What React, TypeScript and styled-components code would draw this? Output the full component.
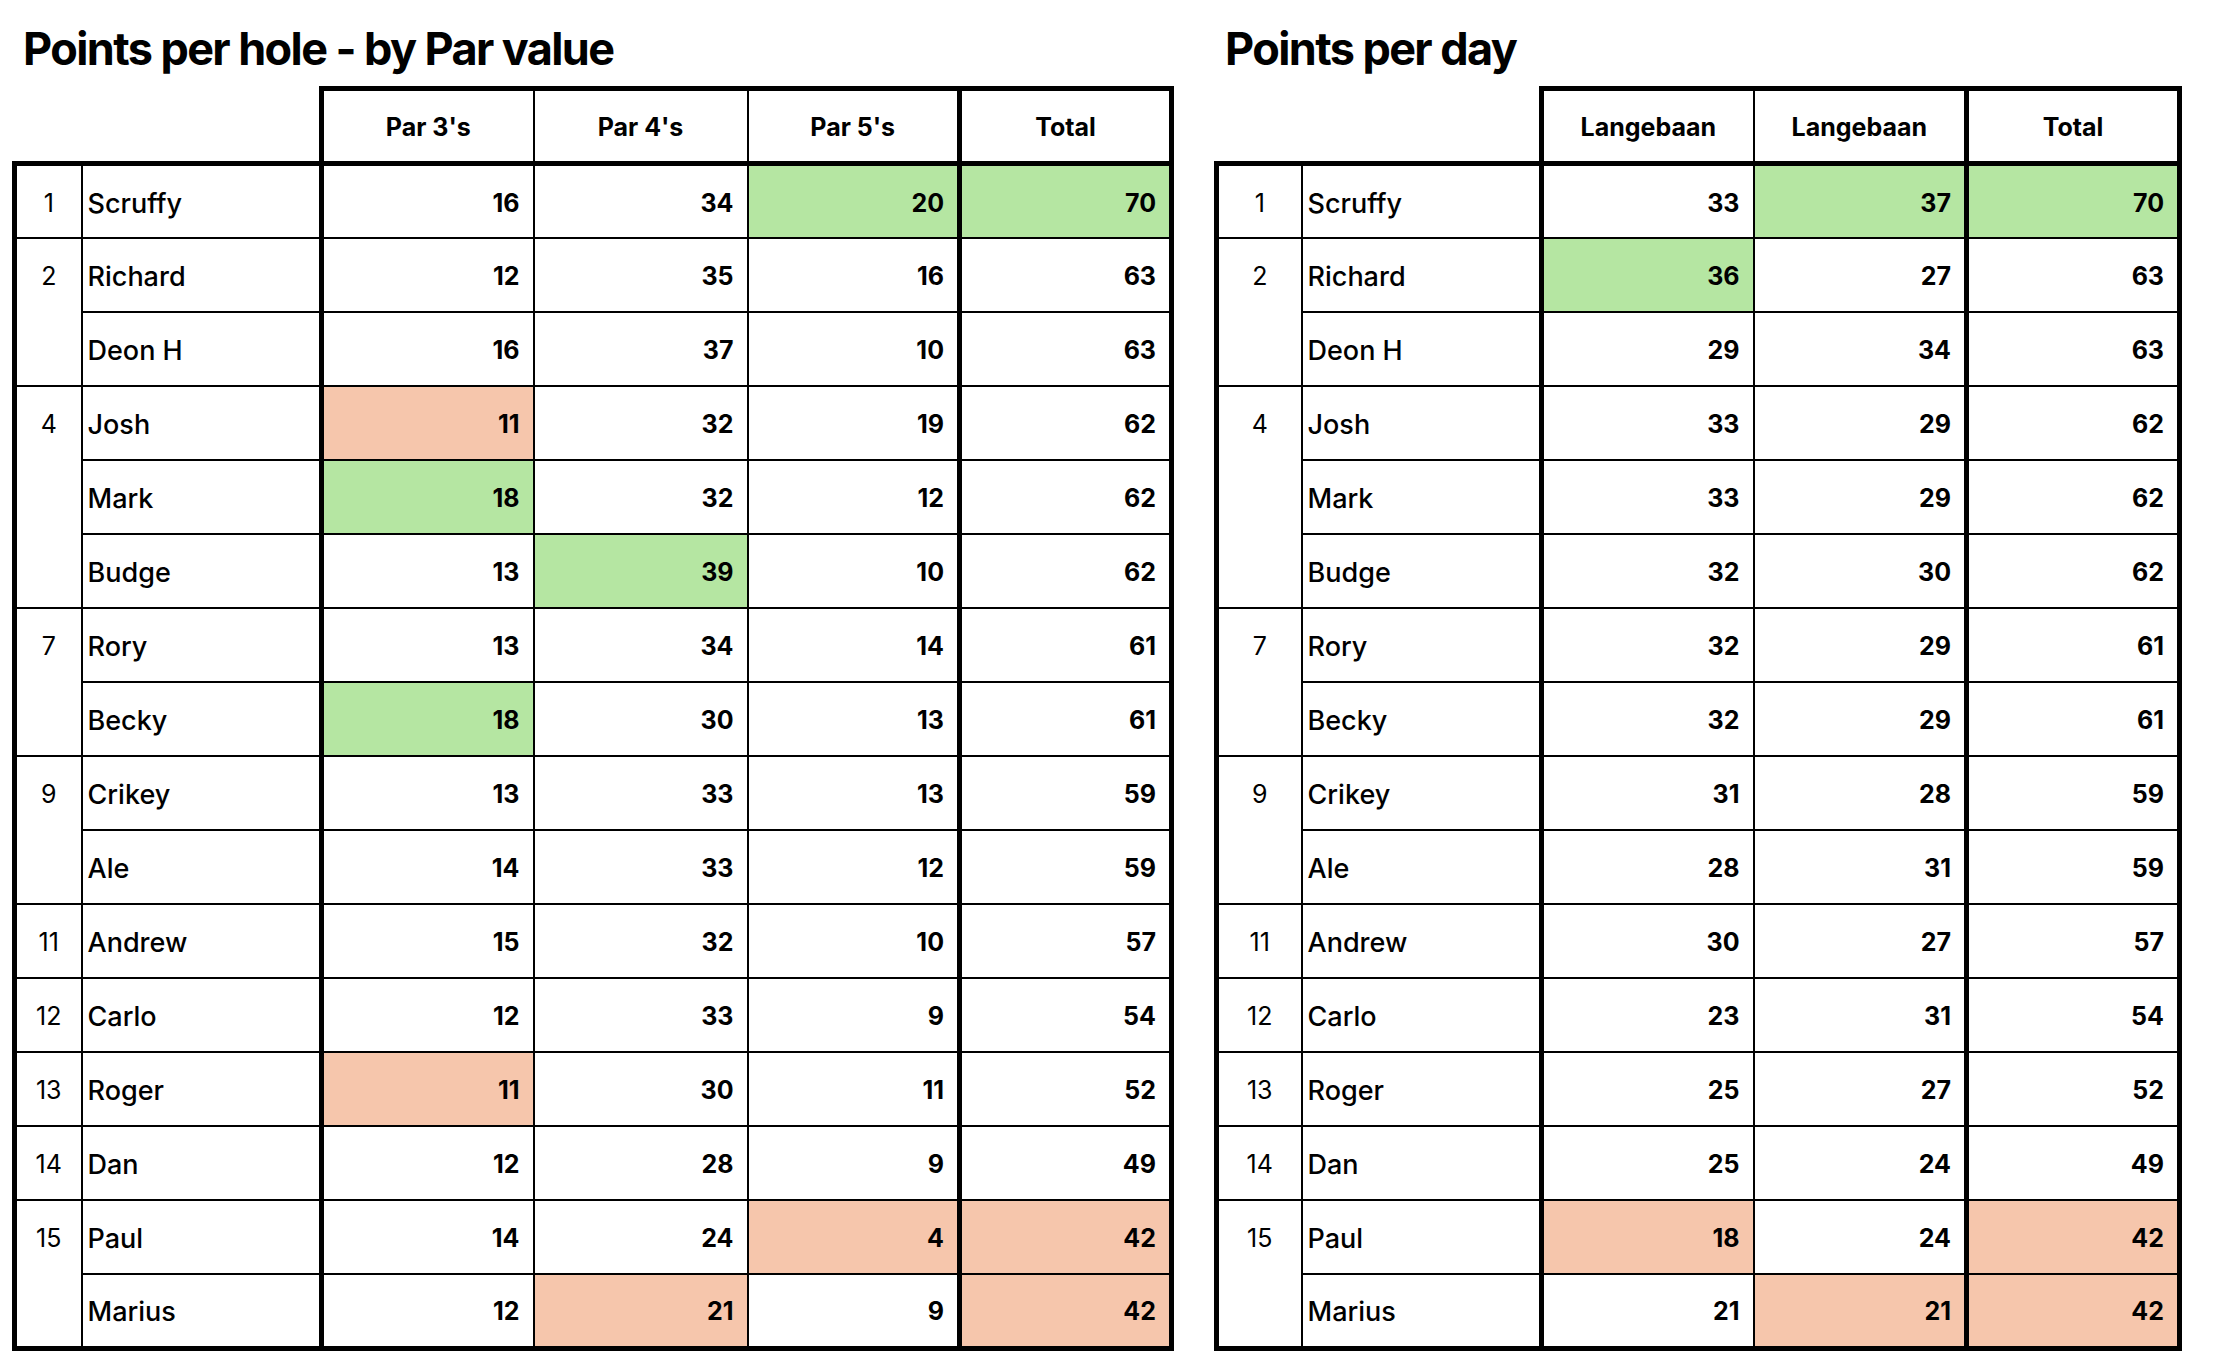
import React from "react";
import styled, { createGlobalStyle, css } from "styled-components";

const GlobalStyle = createGlobalStyle`
  html, body {
    margin: 0;
    padding: 0;
    background: #ffffff;
  }
  body {
    font-family: Inter, "Noto Sans", "Liberation Sans", sans-serif;
    color: #000;
  }
`;

type Tone = "none" | "good" | "bad";

const GREEN = "#b5e6a2";
const PEACH = "#f6c6ac";
const THICK = "5px solid #000";
const THIN = "2px solid #000";

const Page = styled.div`
  display: flex;
  align-items: flex-start;
  gap: 40px;
  padding: 26px 0 0 12px;
`;

const Panel = styled.section`
  display: flex;
  flex-direction: column;
`;

const Title = styled.h1`
  margin: 0 0 15px 11px;
  font-family: Inter, "Noto Sans", sans-serif;
  font-weight: 700;
  font-size: 45px;
  line-height: 45px;
  letter-spacing: -1.6px;
`;

const Table = styled.table`
  border-collapse: collapse;
  table-layout: fixed;
  font-family: Inter, "Noto Sans", sans-serif;
  font-size: 25px;
`;

const HeadRow = styled.tr`
  height: 75px;
`;

const BodyRow = styled.tr`
  height: 74px;
`;

const Blank = styled.th`
  border: none;
  padding: 0;
`;

const HeadCell = styled.th<{ $thickLeft?: boolean; $thickRight?: boolean }>`
  border-top: ${THICK};
  border-bottom: ${THICK};
  border-left: ${(p) => (p.$thickLeft ? THICK : THIN)};
  border-right: ${(p) => (p.$thickRight ? THICK : THIN)};
  font-weight: 700;
  text-align: center;
  vertical-align: middle;
  padding: 2px 0 0;
  white-space: nowrap;
`;

const edgeBorders = css<{ $first?: boolean; $last?: boolean }>`
  border-top: ${(p) => (p.$first ? THICK : THIN)};
  border-bottom: ${(p) => (p.$last ? THICK : THIN)};
`;

const RankCell = styled.td<{ $first?: boolean; $last?: boolean }>`
  ${edgeBorders};
  border-left: ${THICK};
  border-right: ${THIN};
  padding: 0;
  vertical-align: top;
  font-weight: 400;
`;

const RankLabel = styled.div`
  height: 71px;
  display: flex;
  align-items: center;
  justify-content: center;
  padding-top: 2px;
  box-sizing: border-box;
`;

const NameCell = styled.td<{ $first?: boolean; $last?: boolean }>`
  ${edgeBorders};
  border-left: ${THIN};
  border-right: ${THICK};
  padding: 3px 0 0 5px;
  font-size: 27px;
  font-weight: 500;
  text-align: left;
  white-space: nowrap;
`;

const ValueCell = styled.td<{
  $first?: boolean;
  $last?: boolean;
  $tone: Tone;
  $total?: boolean;
}>`
  ${edgeBorders};
  border-left: ${(p) => (p.$total ? THICK : THIN)};
  border-right: ${(p) => (p.$total ? THICK : THIN)};
  background: ${(p) =>
    p.$tone === "good" ? GREEN : p.$tone === "bad" ? PEACH : "#fff"};
  padding: 2px 13px 0 0;
  font-weight: 700;
  text-align: right;
`;

type Cell = [number, Tone?];
type Entry = { name: string; values: Cell[] };
type Group = { rank: number; entries: Entry[] };

const g = (n: number): Cell => [n, "good"];
const b = (n: number): Cell => [n, "bad"];
const n = (v: number): Cell => [v];

const parGroups: Group[] = [
  { rank: 1, entries: [{ name: "Scruffy", values: [n(16), n(34), g(20), g(70)] }] },
  {
    rank: 2,
    entries: [
      { name: "Richard", values: [n(12), n(35), n(16), n(63)] },
      { name: "Deon H", values: [n(16), n(37), n(10), n(63)] },
    ],
  },
  {
    rank: 4,
    entries: [
      { name: "Josh", values: [b(11), n(32), n(19), n(62)] },
      { name: "Mark", values: [g(18), n(32), n(12), n(62)] },
      { name: "Budge", values: [n(13), g(39), n(10), n(62)] },
    ],
  },
  {
    rank: 7,
    entries: [
      { name: "Rory", values: [n(13), n(34), n(14), n(61)] },
      { name: "Becky", values: [g(18), n(30), n(13), n(61)] },
    ],
  },
  {
    rank: 9,
    entries: [
      { name: "Crikey", values: [n(13), n(33), n(13), n(59)] },
      { name: "Ale", values: [n(14), n(33), n(12), n(59)] },
    ],
  },
  { rank: 11, entries: [{ name: "Andrew", values: [n(15), n(32), n(10), n(57)] }] },
  { rank: 12, entries: [{ name: "Carlo", values: [n(12), n(33), n(9), n(54)] }] },
  { rank: 13, entries: [{ name: "Roger", values: [b(11), n(30), n(11), n(52)] }] },
  { rank: 14, entries: [{ name: "Dan", values: [n(12), n(28), n(9), n(49)] }] },
  {
    rank: 15,
    entries: [
      { name: "Paul", values: [n(14), n(24), b(4), b(42)] },
      { name: "Marius", values: [n(12), b(21), n(9), b(42)] },
    ],
  },
];

const dayGroups: Group[] = [
  { rank: 1, entries: [{ name: "Scruffy", values: [n(33), g(37), g(70)] }] },
  {
    rank: 2,
    entries: [
      { name: "Richard", values: [g(36), n(27), n(63)] },
      { name: "Deon H", values: [n(29), n(34), n(63)] },
    ],
  },
  {
    rank: 4,
    entries: [
      { name: "Josh", values: [n(33), n(29), n(62)] },
      { name: "Mark", values: [n(33), n(29), n(62)] },
      { name: "Budge", values: [n(32), n(30), n(62)] },
    ],
  },
  {
    rank: 7,
    entries: [
      { name: "Rory", values: [n(32), n(29), n(61)] },
      { name: "Becky", values: [n(32), n(29), n(61)] },
    ],
  },
  {
    rank: 9,
    entries: [
      { name: "Crikey", values: [n(31), n(28), n(59)] },
      { name: "Ale", values: [n(28), n(31), n(59)] },
    ],
  },
  { rank: 11, entries: [{ name: "Andrew", values: [n(30), n(27), n(57)] }] },
  { rank: 12, entries: [{ name: "Carlo", values: [n(23), n(31), n(54)] }] },
  { rank: 13, entries: [{ name: "Roger", values: [n(25), n(27), n(52)] }] },
  { rank: 14, entries: [{ name: "Dan", values: [n(25), n(24), n(49)] }] },
  {
    rank: 15,
    entries: [
      { name: "Paul", values: [b(18), n(24), b(42)] },
      { name: "Marius", values: [n(21), b(21), b(42)] },
    ],
  },
];

type ScoreTableProps = {
  title: string;
  columns: string[];
  widths: number[];
  groups: Group[];
};

const ScoreTable: React.FC<ScoreTableProps> = ({ title, columns, widths, groups }) => {
  const total = widths.reduce((a, c) => a + c, 0);
  const lastGroup = groups.length - 1;
  return (
    <Panel>
      <Title>{title}</Title>
      <Table style={{ width: total }}>
        <colgroup>
          {widths.map((w, i) => (
            <col key={i} style={{ width: w }} />
          ))}
        </colgroup>
        <thead>
          <HeadRow>
            <Blank colSpan={2} />
            {columns.map((c, i) => (
              <HeadCell
                key={i}
                $thickLeft={i === 0 || i === columns.length - 1}
                $thickRight={i === columns.length - 1}
              >
                {c}
              </HeadCell>
            ))}
          </HeadRow>
        </thead>
        <tbody>
          {groups.map((grp, gi) =>
            grp.entries.map((e, ei) => {
              const first = gi === 0 && ei === 0;
              const last = gi === lastGroup && ei === grp.entries.length - 1;
              return (
                <BodyRow key={`${gi}-${ei}`}>
                  {ei === 0 && (
                    <RankCell
                      rowSpan={grp.entries.length}
                      $first={gi === 0}
                      $last={gi === lastGroup}
                    >
                      <RankLabel>{grp.rank}</RankLabel>
                    </RankCell>
                  )}
                  <NameCell $first={first} $last={last}>
                    {e.name}
                  </NameCell>
                  {e.values.map(([v, tone], vi) => (
                    <ValueCell
                      key={vi}
                      $first={first}
                      $last={last}
                      $tone={tone ?? "none"}
                      $total={vi === e.values.length - 1}
                    >
                      {v}
                    </ValueCell>
                  ))}
                </BodyRow>
              );
            })
          )}
        </tbody>
      </Table>
    </Panel>
  );
};

export default function App() {
  return (
    <>
      <GlobalStyle />
      <Page>
        <ScoreTable
          title="Points per hole - by Par value"
          columns={["Par 3's", "Par 4's", "Par 5's", "Total"]}
          widths={[67, 240, 212, 214, 212, 212]}
          groups={parGroups}
        />
        <ScoreTable
          title="Points per day"
          columns={["Langebaan", "Langebaan", "Total"]}
          widths={[85, 240, 212, 213, 213]}
          groups={dayGroups}
        />
      </Page>
    </>
  );
}
